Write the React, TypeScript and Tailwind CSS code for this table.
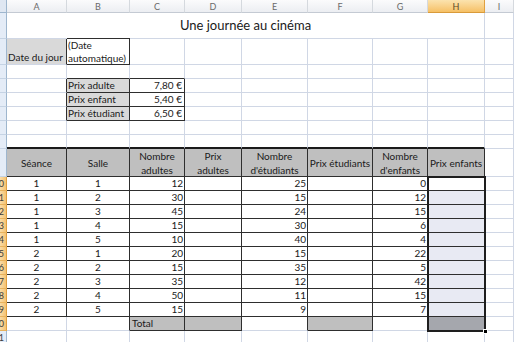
import React from "react";

const COLS = ["A", "B", "C", "D", "E", "F", "G", "H", "I"];

// Séance, Salle, adultes, étudiants, enfants
const seances: number[][] = [
  [1, 1, 12, 25, 0],
  [1, 2, 30, 15, 12],
  [1, 3, 45, 24, 15],
  [1, 4, 15, 30, 6],
  [1, 5, 10, 40, 4],
  [2, 1, 20, 15, 22],
  [2, 2, 15, 35, 5],
  [2, 3, 35, 12, 42],
  [2, 4, 50, 11, 15],
  [2, 5, 15, 9, 7],
];

const prix = [
  ["Prix adulte", "7,80 €"],
  ["Prix enfant", "5,40 €"],
  ["Prix étudiant", "6,50 €"],
];

const entetes: React.ReactNode[] = [
  "Séance",
  "Salle",
  <>Nombre<br />adultes</>,
  <>Prix<br />adultes</>,
  <>Nombre<br />d'étudiants</>,
  "Prix étudiants",
  <>Nombre<br />d'enfants</>,
  "Prix enfants",
];

// cells that carry a thin black frame
const bordered = (r: number, c: number) =>
  (r === 2 && c === 2) ||
  (r >= 4 && r <= 6 && (c === 2 || c === 3)) ||
  (r >= 9 && r <= 19 && c >= 1 && c <= 8) ||
  (r === 20 && [3, 4, 6, 8].includes(c));

const isSelected = (r: number) => r >= 10 && r <= 20;

type CellInfo = {
  content?: React.ReactNode;
  pos?: string;
  bg?: string;
};

function cellInfo(r: number, c: number): CellInfo {
  if (r === 2 && c === 1) return { content: "Date du jour", pos: "items-end justify-start pl-[1px]", bg: "bg-[#d9d9d9]" };
  if (r === 2 && c === 2)
    return { content: <>(Date<br />automatique)</>, pos: "items-start justify-start pl-[1px]" };
  if (r >= 4 && r <= 6 && c === 2) return { content: prix[r - 4][0], pos: "items-end justify-start pl-[1px]", bg: "bg-[#d9d9d9]" };
  if (r >= 4 && r <= 6 && c === 3) return { content: prix[r - 4][1], pos: "items-end justify-end pr-[2px]" };
  if (r === 9 && c <= 8)
    return { content: entetes[c - 1], pos: "items-center justify-center text-center leading-[14px]", bg: "bg-[#bfbfbf]" };
  if (r >= 10 && r <= 19 && c <= 8) {
    const d = seances[r - 10];
    const bg = c === 8 ? (r === 10 ? "bg-white" : "bg-[#e8eaf3]") : undefined;
    if (c === 1) return { content: d[0], pos: "items-end justify-center", bg };
    if (c === 2) return { content: d[1], pos: "items-end justify-center", bg };
    if (c === 3) return { content: d[2], pos: "items-end justify-end pr-[1px]", bg };
    if (c === 5) return { content: d[3], pos: "items-end justify-end pr-[1px]", bg };
    if (c === 7) return { content: d[4], pos: "items-end justify-end pr-[1px]", bg };
    return { bg };
  }
  if (r === 20 && c === 3) return { content: "Total", pos: "items-end justify-start pl-[2px]", bg: "bg-[#bfbfbf]" };
  if (r === 20 && (c === 4 || c === 6)) return { bg: "bg-[#bfbfbf]" };
  if (r === 20 && c === 8) return { bg: "bg-[#a5a7ad]" };
  return {};
}

function RowHeader({ r }: { r: number }) {
  const sel = isSelected(r);
  return (
    <div
      className={`flex items-center justify-end overflow-hidden border-r border-b pr-[2px] text-[9px] text-[#3b3b3b] ${
        sel
          ? "bg-gradient-to-r from-[#f9dca6] to-[#f5c372] border-r-[#e0a040] border-b-[#e8b25c]"
          : "bg-[#e4ecf7] border-r-[#9eb6ce] border-b-[#c5d3e4]"
      }`}
    >
      {r >= 10 ? <span className="whitespace-nowrap">{r}</span> : null}
    </div>
  );
}

function Cell({ r, c }: { r: number; c: number }) {
  const info = cellInfo(r, c);
  const darkR = bordered(r, c) || bordered(r, c + 1);
  const darkB = bordered(r, c) || bordered(r + 1, c);
  const right = darkR ? "border-r border-r-[#2e2e2e]" : "border-r border-r-[#d0d7e5]";
  const bottom =
    r === 8 && c <= 8
      ? "border-b-2 border-b-[#1a1a1a]"
      : darkB
        ? "border-b border-b-[#2e2e2e]"
        : "border-b border-b-[#d0d7e5]";
  const top = r === 2 && c === 2 ? "shadow-[0_-1px_0_#2e2e2e]" : "";
  return (
    <div
      className={`flex overflow-hidden whitespace-nowrap leading-[13px] ${right} ${bottom} ${top} ${info.pos ?? ""} ${
        info.bg ?? "bg-white"
      }`}
    >
      {info.content}
    </div>
  );
}

export default function App() {
  const rows = Array.from({ length: 21 }, (_, i) => i + 1);

  return (
    <div className="relative h-[342px] w-[514px] overflow-hidden bg-white font-['Lato','Open_Sans',sans-serif] text-[10px] text-[#1a1a1a]">
      <div className="grid grid-cols-[7px_60px_63px_55px_57px_66px_65px_55px_57px_29px] grid-rows-[13px_26px_26px_repeat(6,14px)_28px_repeat(12,14px)]">
        {/* corner + column letters */}
        <div className="border-r border-b border-r-[#9eb6ce] border-b-[#9eb6ce] bg-[#dfe7f2]" />
        {COLS.map((l) => (
          <div
            key={l}
            className={`flex items-center justify-center border-r border-b text-[9px] leading-none ${
              l === "H"
                ? "bg-gradient-to-b from-[#fbe3ae] to-[#f6c064] border-r-[#e0a040] border-b-[#d99a3a] text-[#5a4a2a]"
                : "bg-gradient-to-b from-[#fbfbfc] to-[#eceef2] border-r-[#d5d9de] border-b-[#c4cad3] text-[#6a6a6a]"
            }`}
          >
            {l}
          </div>
        ))}

        {rows.map((r) => (
          <React.Fragment key={r}>
            <RowHeader r={r} />
            {r === 1 ? (
              <>
                <div className="col-span-8 flex items-center justify-center border-r border-b border-r-[#d0d7e5] border-b-[#d0d7e5] bg-white pt-[1px] text-[13px]">
                  Une journée au cinéma
                </div>
                <div className="border-r border-b border-r-[#d0d7e5] border-b-[#d0d7e5] bg-white" />
              </>
            ) : (
              COLS.map((_, i) => <Cell key={i} r={r} c={i + 1} />)
            )}
          </React.Fragment>
        ))}
      </div>

      {/* selection frame H10:H20 with fill handle */}
      <div className="pointer-events-none absolute left-[427px] top-[176px] h-[156px] w-[59px] border-2 border-[#1e1e1e]" />
      <div className="pointer-events-none absolute left-[483px] top-[329px] h-[5px] w-[5px] border border-white bg-black" />
    </div>
  );
}
